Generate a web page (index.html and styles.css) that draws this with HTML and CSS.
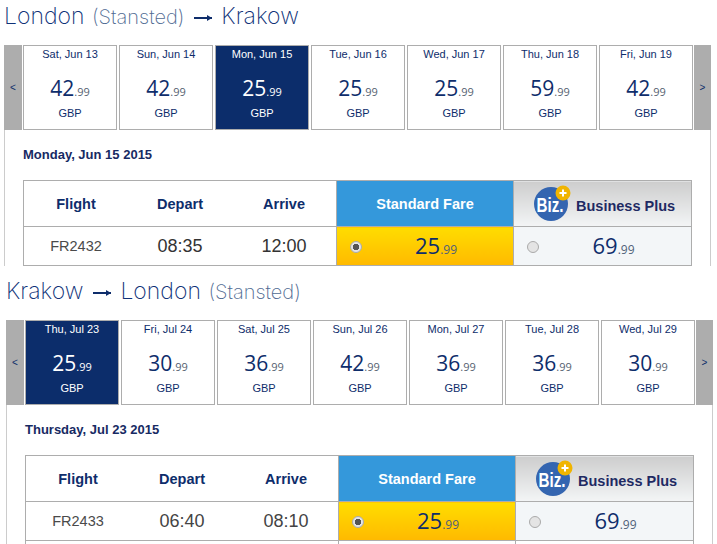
FILE: index.html
```html
<!DOCTYPE html>
<html lang="en">
<head>
<meta charset="utf-8">
<title>Flights</title>
<link rel="stylesheet" href="styles.css">
</head>
<body>
<section class="leg leg-out">
  <h2 class="route">London <span class="airport">(Stansted)</span> <span class="arrow"></span> Krakow</h2>
  <div class="panel">
    <div class="calendar">
      <div class="nav">&lt;</div>
      <div class="day"><div class="date">Sat, Jun 13</div><div class="price">42<small>.99</small></div><div class="cur">GBP</div></div>
      <div class="day"><div class="date">Sun, Jun 14</div><div class="price">42<small>.99</small></div><div class="cur">GBP</div></div>
      <div class="day active"><div class="date">Mon, Jun 15</div><div class="price">25<small>.99</small></div><div class="cur">GBP</div></div>
      <div class="day"><div class="date">Tue, Jun 16</div><div class="price">25<small>.99</small></div><div class="cur">GBP</div></div>
      <div class="day"><div class="date">Wed, Jun 17</div><div class="price">25<small>.99</small></div><div class="cur">GBP</div></div>
      <div class="day"><div class="date">Thu, Jun 18</div><div class="price">59<small>.99</small></div><div class="cur">GBP</div></div>
      <div class="day"><div class="date">Fri, Jun 19</div><div class="price">42<small>.99</small></div><div class="cur">GBP</div></div>
      <div class="nav">&gt;</div>
    </div>
    <h3 class="selected">Monday, Jun 15 2015</h3>
    <table class="flights">
      <thead>
        <tr>
          <th class="c-flight">Flight</th><th class="c-depart">Depart</th><th class="c-arrive">Arrive</th>
          <th class="std-head">Standard Fare</th>
          <th class="biz-head"><div class="biz-wrap">
            <svg class="biz-logo" viewBox="0 0 37 36" width="37" height="36"><circle cx="17" cy="19" r="17" fill="#3465b0"/><text x="16" y="27" class="biz-text" textLength="27" lengthAdjust="spacingAndGlyphs">Biz.</text><circle cx="29" cy="8" r="7.5" fill="#f0b400"/><path d="M29 4.5v7M25.5 8h7" stroke="#fff" stroke-width="2"/></svg>
            <span>Business Plus</span></div></th>
        </tr>
      </thead>
      <tbody>
        <tr>
          <td class="num">FR2432</td><td class="time">08:35</td><td class="time">12:00</td>
          <td class="fare std"><div class="fare-wrap"><span class="radio on"></span><span class="fare-price">25<small>.99</small></span></div></td>
          <td class="fare biz"><div class="fare-wrap"><span class="radio"></span><span class="fare-price">69<small>.99</small></span></div></td>
        </tr>
      </tbody>
    </table>
  </div>
</section>
<section class="leg leg-back">
  <h2 class="route">Krakow <span class="arrow"></span> London <span class="airport">(Stansted)</span></h2>
  <div class="panel">
    <div class="calendar">
      <div class="nav">&lt;</div>
      <div class="day active"><div class="date">Thu, Jul 23</div><div class="price">25<small>.99</small></div><div class="cur">GBP</div></div>
      <div class="day"><div class="date">Fri, Jul 24</div><div class="price">30<small>.99</small></div><div class="cur">GBP</div></div>
      <div class="day"><div class="date">Sat, Jul 25</div><div class="price">36<small>.99</small></div><div class="cur">GBP</div></div>
      <div class="day"><div class="date">Sun, Jul 26</div><div class="price">42<small>.99</small></div><div class="cur">GBP</div></div>
      <div class="day"><div class="date">Mon, Jul 27</div><div class="price">36<small>.99</small></div><div class="cur">GBP</div></div>
      <div class="day"><div class="date">Tue, Jul 28</div><div class="price">36<small>.99</small></div><div class="cur">GBP</div></div>
      <div class="day"><div class="date">Wed, Jul 29</div><div class="price">30<small>.99</small></div><div class="cur">GBP</div></div>
      <div class="nav">&gt;</div>
    </div>
    <h3 class="selected">Thursday, Jul 23 2015</h3>
    <table class="flights">
      <thead>
        <tr>
          <th class="c-flight">Flight</th><th class="c-depart">Depart</th><th class="c-arrive">Arrive</th>
          <th class="std-head">Standard Fare</th>
          <th class="biz-head"><div class="biz-wrap">
            <svg class="biz-logo" viewBox="0 0 37 36" width="37" height="36"><circle cx="17" cy="19" r="17" fill="#3465b0"/><text x="16" y="27" class="biz-text" textLength="27" lengthAdjust="spacingAndGlyphs">Biz.</text><circle cx="29" cy="8" r="7.5" fill="#f0b400"/><path d="M29 4.5v7M25.5 8h7" stroke="#fff" stroke-width="2"/></svg>
            <span>Business Plus</span></div></th>
        </tr>
      </thead>
      <tbody>
        <tr>
          <td class="num">FR2433</td><td class="time thin">06:40</td><td class="time thin">08:10</td>
          <td class="fare std"><div class="fare-wrap"><span class="radio on"></span><span class="fare-price">25<small>.99</small></span></div></td>
          <td class="fare biz"><div class="fare-wrap"><span class="radio"></span><span class="fare-price">69<small>.99</small></span></div></td>
        </tr>
        <tr>
          <td></td><td></td><td></td><td class="fare"></td><td class="fare"></td>
        </tr>
      </tbody>
    </table>
  </div>
</section>
</body>
</html>
```
FILE: styles.css
```css
html, body { margin: 0; padding: 0; background: #fff; }
body { width: 717px; height: 544px; overflow: hidden; font-family: "Liberation Sans", Arial, sans-serif; color: #0e2d6b; }
.leg { width: 707px; box-sizing: border-box; }
.leg-out { margin-left: 4px; height: 266px; }
.leg-back { margin-left: 6px; height: 278px; overflow: hidden; }
.route { margin: 0; font-family: Inter, sans-serif; font-weight: 200; font-size: 23px; color: #0f3278; white-space: nowrap; }
.leg-out .route { height: 45px; line-height: 32px; }
.leg-back .route { height: 54px; line-height: 50px; }
.airport { font-size: 20px; color: #4f6a92; margin-left: 1px; }
.arrow { display: inline-block; vertical-align: middle; width: 18px; height: 2px; background: #0e2d6b; margin: 0 3px; position: relative; }
.arrow::after { content: ""; position: absolute; right: 0; top: -2px; border-left: 5px solid #0e2d6b; border-top: 3px solid transparent; border-bottom: 3px solid transparent; }
.panel { border-left: 1px solid #ccc; border-right: 1px solid #ccc; width: 707px; box-sizing: border-box; }
.calendar { display: flex; height: 85px; margin: 0 -1px; }
.nav { width: 18px; background: #adadad; color: #0e2d6b; font-size: 10px; display: flex; align-items: center; justify-content: center; flex: none; }
.calendar .nav:first-child { margin-right: 1px; }
.calendar .nav:last-child { margin-left: 1px; width: 17px; }
.day { width: 94px; flex: none; box-sizing: border-box; border: 1px solid #adadad; margin-right: 2px; text-align: center; background: #fff; }
.day:nth-last-child(2) { margin-right: 0; }
.day.active { background: #0c2d6b; color: #fff; }
.date { font-size: 11px; line-height: 14px; margin-top: 1px; }
.price { font-family: "Open Sans", sans-serif; font-size: 21px; line-height: 28px; margin-top: 13px; color: #0e2d6b; }
.price small { font-size: 11px; color: #555f70; }
.active .price, .active .price small { color: #fff; }
.cur { font-size: 11px; line-height: 14px; margin-top: 0; }
.selected { margin: 0 0 0 18px; font-size: 13px; font-weight: 700; line-height: 16px; padding: 17px 0 17px; color: #172a63; }
.flights { border-collapse: collapse; table-layout: fixed; width: 669px; margin-left: 18px; border: 1px solid #adadad; }
.flights th { height: 45px; padding: 0; font-size: 14.5px; font-weight: 700; border-bottom: 1px solid #adadad; color: #0e2d6b; }
.flights td { height: 38px; padding: 0; text-align: center; border-bottom: 1px solid #adadad; }
.c-flight, .c-depart, .c-arrive { width: 104px; }
.std-head { width: 176px; background: #3498db; border-left: 1px solid #adadad; color: #fff !important; }
.biz-head { background: linear-gradient(#cdcdcd, #f3f5f6); border-left: 1px solid #adadad; }
.biz-wrap { display: flex; align-items: center; padding-left: 20px; gap: 5px; color: #1f2a63; }
.biz-logo { flex: none; margin-top: -2px; overflow: visible; }
.biz-wrap span { margin-top: 5px; }
.biz-text { font-family: "Liberation Sans Narrow", "Liberation Sans", sans-serif; font-size: 21px; font-weight: 700; fill: #fff; text-anchor: middle; }
.num { font-size: 14.5px; color: #4a4a4a; }
.time { font-size: 18px; color: #333; }
.thin { color: #444; }
.fare { border-left: 1px solid #adadad; }
.std { background: linear-gradient(#ffdd00, #ffb900); }
.biz { background: #f3f6f8; }
.fare-wrap { display: flex; align-items: center; padding-left: 13px; height: 38px; }
.radio { width: 12px; height: 12px; border-radius: 50%; flex: none; box-sizing: border-box; border: 1px solid #aaa; background: #e4e4e4; margin-top: 1px; }
.radio.on { background: radial-gradient(circle, #555 0 3px, #e4e4e4 3.5px); }
.fare-price { font-family: "Open Sans", sans-serif; font-size: 22px; color: #0e2d6b; flex: 1; text-align: center; padding-right: 3px; padding-bottom: 2px; }
.fare-price small { font-size: 12px; color: #4f5f78; }
```
